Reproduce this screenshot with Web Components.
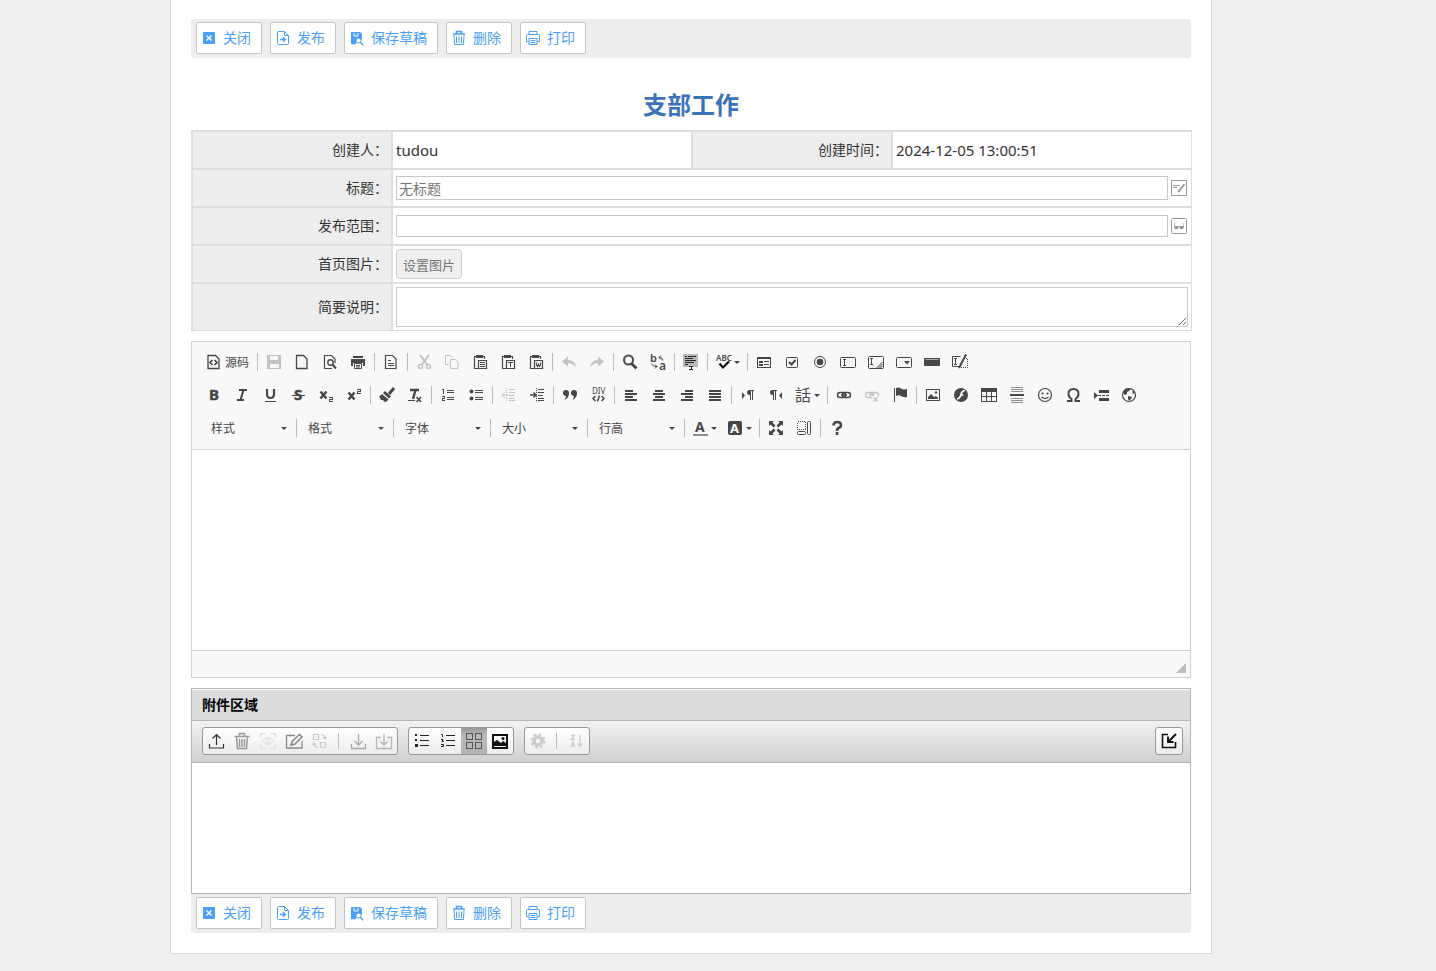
<!DOCTYPE html>
<html lang="zh-CN">
<head>
<meta charset="utf-8">
<title>支部工作</title>
<style>
    body {
        margin: 0;
        padding: 0 54px 0 0;
        background: #efefef;
        color: #333;
        font: 14px/20px "Noto Sans", "Noto Sans CJK SC", sans-serif;
    }
</style>
</head>
<body>
<doc-page>
    <action-bar></action-bar>
    <doc-form heading="支部工作"></doc-form>
    <rich-editor></rich-editor>
    <attach-panel heading="附件区域"></attach-panel>
    <action-bar></action-bar>
</doc-page>

<script>
// 16x16 icons, stroked by default; class "f" is filled, "p" keeps pixel edges
const ICONS = {
    // action bar
    close: `<rect class="f" x="2" y="2" width="12" height="12" rx="1"/><path d="M5.500 5.500l5 5m0-5l-5 5" stroke="#fff" stroke-width="1.400"/>`,
    publish: `<path d="M3.500 1.500h6l4 4v8q0 1-1 1h-9q-1 0-1-1v-11q0-1 1-1zM9.500 1.500v4h4"/><path d="M5 9.500h5M8 7.300l2.200 2.200L8 11.700" stroke-width="1.600"/>`,
    draft: `<path class="f" d="M2 2h9l2 2v6l-3-2-3 2v4H2z"/><path d="M5 3v3h4V3" stroke="#fff"/><circle cx="9.500" cy="10.500" r="2.500" fill="#fff"/><path d="M11.200 12.200l3 3M2 13.500h5" stroke-width="1.300"/>`,
    trash: `<path d="M2 4h12M5.500 4V1.500h5V4" stroke-width="1.600"/><path d="M3 5l.5 9.500h9L13 5M5.500 6.500V13M8 6.500V13M10.500 6.500V13"/>`,
    print: `<path d="M4 4.500v-3h8v3M3.500 11.500h-2V5.500q0-1 1-1h11q1 0 1 1v6h-2M4 8.500h8v6H4zM5.500 10.500h5M5.500 12.500h5"/>`,
    // form fields
    edit: `<rect x=".5" y=".5" width="15" height="15"/><path d="M2 5.500h7M2 7.500h4"/><path d="M13.500 4l-5.500 7-1 1" stroke-width="2"/>`,
    glasses: `<rect x=".5" y=".5" width="15" height="15" rx="1"/><path class="f" d="M3 8h4.500v2q-1 2-3.500 1L3 9zM8.500 8H13v1l-1 2q-2.500 1-3.500-1z"/><path opacity=".5" d="M3.500 8V5.500h1M12.500 8V5.500h-1M7 8.500h2"/>`,
    // editor, row 1
    source: `<path d="M2 1.500h7.500l3.500 3.500v9.500H2z" stroke-width="1.300"/><path d="M6.500 6L4 8.500 6.500 11M8.500 6L11 8.500 8.500 11" stroke-width="1.700"/>`,
    save: `<path class="f" fill-rule="evenodd" d="M1 1h14v14H1zM4 2v4h8V2zM4 10v4h9v-4z"/><path class="p" d="M3 9.500h10"/>`,
    newpage: `<path d="M2.500 1.500h7l3.500 3.500v9.500H2.500z" stroke-width="1.300"/>`,
    preview: `<path d="M10 14.500H2.500v-13h7l3.500 3.500v4" stroke-width="1.200"/><circle cx="8.500" cy="8.500" r="2.700" stroke-width="1.400"/><path d="M10.500 10.500l3.500 4" stroke-width="2"/>`,
    ckprint: `<path class="f" d="M3 2h10v2H3zM1 5h14v7h-2V9H3v3H1z"/><path d="M4.500 9.500h7v5h-7zM6 11.500h4M6 13h4"/>`,
    doc: `<path d="M2.500 1.500h7l3.500 3.500v9.500H2.500z" stroke-width="1.200"/><path class="p" d="M5 6.500h3M5 9.500h6M5 11.500h6"/>`,
    cut: `<path d="M4 1l7.500 10M13 1L5.500 11" stroke-width="2"/><circle cx="4.500" cy="12.500" r="2" stroke-width="1.400"/><circle cx="12.500" cy="12.500" r="2" stroke-width="1.400"/>`,
    copy: `<path d="M5 10.500H1.500v-9H6L8.500 4M6.500 5.500h5l2.500 3v6H6.500z"/>`,
    paste: `<path d="M4 2.500H2.500v12H6M11 2.500h1.500V5M6.500 6.500h8v8h-8z" stroke-width="1.200"/><path class="f p" d="M4 1h7v3H4z"/><path class="p" d="M8 8.500h5M8 10.500h5M8 12.500h5"/>`,
    pastetext: `<path d="M4 2.500H2.500v12H6M11 2.500h1.500V5M6.500 6.500h8v8h-8z" stroke-width="1.200"/><path class="f p" d="M4 1h7v3H4z"/><path class="p" d="M8 8.500h5M10.500 8v5"/>`,
    pasteword: `<path d="M4 2.500H2.500v12H6M11 2.500h1.500V5M6.500 6.500h8v8h-8zM8.500 8.500v2l1 2 1-2 1 2 1-2v-2" stroke-width="1.200"/><path class="f p" d="M4 1h7v3H4z"/>`,
    undo: `<path class="f" d="M1 7.500L7 2.500V6q7 0 8 7.500Q12 9 7 9v3.500z"/>`,
    redo: `<path class="f" d="M15 7.500L9 2.500V6q-7 0-8 7.500Q4 9 9 9v3.500z"/>`,
    find: `<circle cx="6.500" cy="6" r="4.500" stroke-width="2"/><path d="M9.500 9.500l5 5" stroke-width="3"/>`,
    replace: `<text x="0" y="8" font-size="11" font-weight="600">b</text><text x="9" y="16" font-size="12" font-weight="600">a</text><path d="M9 3.500l2-2M9 3.500l2 2M9 3.500q4 0 4 3M7 12.500l-2-2M7 12.500l-2 2M7 12.500q-5 0-5-3"/>`,
    selectall: `<path class="f p" fill-opacity=".35" d="M0 0h15v13H0z"/><path class="p" stroke="#222" d="M2 2.500h2M5 2.500h8M2 4.500h8M2 6.500h11M2 8.500h9M2 10.500h3M6 12.500h4M6 15.500h4M8 12v4"/>`,
    spell: `<text x="0" y="7" font-size="8" font-weight="600">ABC</text><path d="M3.500 9.500l3.500 4 6-6" stroke="#111" stroke-width="2.200"/>`,
    form: `<path class="p" d="M1.500 3.500h13v10h-13z"/><path class="f p" d="M1 3h14v2H1zM3 7h4v2H3zM3 10h4v2H3z"/><path class="p" d="M8 7.500h5M8 10.500h5"/>`,
    check: `<rect x="2.500" y="3.500" width="11" height="10" rx="1"/><path d="M5 8l2.500 2.500L11.500 6" stroke-width="2"/>`,
    radio: `<circle cx="8" cy="8" r="5.500"/><circle class="f" cx="8" cy="8" r="3.300"/>`,
    textfield: `<rect x=".5" y="3.500" width="15" height="10" rx="1"/><path class="p" d="M3 5.500h3M3 11.500h3M4.500 5v7"/>`,
    textarea: `<rect x=".5" y="2.500" width="15" height="12" rx="1"/><path class="p" d="M2 4.500h3M2 10.500h3M3.500 4v7"/><path d="M8.500 14l6-6M10.500 14l4-4M12.500 14l2-2"/>`,
    select: `<rect x=".5" y="3.500" width="15" height="10" rx="1"/><path class="f" d="M8 7h6l-3 3.500z"/>`,
    button: `<rect class="f" x="0" y="4" width="16" height="8" rx="1"/><path stroke="#aaa" d="M1.500 5.500h13"/>`,
    hidden: `<path d="M8.500 2.500H.5v10H7"/><path class="p" d="M2 4.500h3M2 10.500h3M3.500 4v7"/><path d="M14 .5L7 14" stroke-width="2"/><path d="M9 13.500h6.500v-9H12" stroke-dasharray="1 1"/>`,
    // editor, row 2
    bold: `<text x="3" y="13" font-size="15" font-weight="bold" style="stroke:currentColor;stroke-width:.5">B</text>`,
    italic: `<path d="M5 3h8M3 13h7M9.500 3L6.500 13" stroke-width="2"/>`,
    underline: `<path d="M5 2v5q0 4 3.500 4T12 7V2" stroke-width="2.200"/><path class="p" d="M3 14.500h11"/>`,
    strike: `<text x="4" y="13" font-size="15" font-weight="bold" style="stroke:currentColor;stroke-width:.5">S</text><path class="p" d="M2 8.500h13"/>`,
    sub: `<path d="M2.500 4.500l6 7m0-7l-6 7" stroke-width="2.500"/><path class="p" d="M11 10.500h3.500v2h-3v2H15"/>`,
    sup: `<path d="M2.500 5.500l6 7m0-7l-6 7" stroke-width="2.500"/><path class="p" d="M11 2.500h3.500v2h-3v2H15"/>`,
    brush: `<path d="M10 7l5-6" stroke-width="3"/><path class="f" d="M6 4l6 5.500-2 2L4 6zM3 7l6.500 5.500L7 15l-2-.5L4 13H2L0 9q2 0 3-2z"/>`,
    removeformat: `<path d="M3 3h9M8.500 3l-2.500 9" stroke-width="2.400"/><path class="p" d="M1 13.500h7"/><path d="M9.500 10l4.500 5m0-5l-4.500 5" stroke-width="1.600"/>`,
    numlist: `<path class="p" d="M7 3.500h7M7 5.500h7M7 10.500h7M7 12.500h7M2 2.500h1.500V7M2 9.500h2.500v2h-2v2H5"/>`,
    bullist: `<circle class="f" cx="3.500" cy="4.500" r="2"/><circle class="f" cx="3.500" cy="11.500" r="2"/><path class="p" d="M7 3.500h8M7 5.500h8M7 10.500h8M7 12.500h8"/>`,
    outdent: `<path class="p" d="M8 2.500h6M8 5.500h6M8 8.500h5M8 11.500h6M8 13.500h6"/><path class="p" d="M5.500 1v14" stroke-dasharray="1 1"/><path d="M7 8H1.500M3.500 5.500L1 8l2.500 2.500"/>`,
    indent: `<path class="p" d="M9 2.500h6M9 5.500h6M9 8.500h5M9 11.500h6M9 13.500h6"/><path class="p" d="M7.500 1v14" stroke-dasharray="1 1"/><path d="M1 8h6M4.500 5.500L7 8l-2.500 2.500" stroke-width="1.500"/>`,
    quote: `<circle class="f" cx="4" cy="6" r="3"/><path class="f" d="M7 6q0 5-4.500 7 2-3 1.500-5z"/><circle class="f" cx="12" cy="6" r="3"/><path class="f" d="M15 6q0 5-4.500 7 2-3 1.500-5z"/>`,
    div: `<text x="2" y="7" font-size="8">DIV</text><path d="M5.500 9L3 11.500 5.500 14M11.500 9l2.500 2.500-2.500 2.500M9.500 8.500l-2 6" stroke-width="1.500"/>`,
    left: `<path class="p" d="M2 4h8M2 7h12M2 10h8M2 13h12" stroke-width="2"/>`,
    center: `<path class="p" d="M4 4h8M2 7h12M4 10h8M2 13h12" stroke-width="2"/>`,
    right: `<path class="p" d="M6 4h8M2 7h12M6 10h8M2 13h12" stroke-width="2"/>`,
    justify: `<path class="p" d="M2 4h12M2 7h12M2 10h12M2 13h12" stroke-width="2"/>`,
    ltr: `<path class="f" d="M2 5l3 3.500L2 12zM14 3H9.500Q7 3 7 5.500T10 8v5h1V4h1v9h1V4h1z"/>`,
    rtl: `<path class="f" d="M14 5l-3 3.500 3 3.500zM9 3H4.500Q2 3 2 5.500T5 8v5h1V4h1v9h1V4h1z"/>`,
    lang: `<text x="-1" y="14" font-size="16">話</text>`,
    link: `<rect x="1.500" y="5.500" width="8" height="5" rx="2.500" stroke-width="1.500"/><rect x="6.500" y="5.500" width="8" height="5" rx="2.500" stroke-width="1.500"/><path d="M5 8h6" stroke-width="1.500"/>`,
    unlink: `<path d="M8 10.500H4a2.500 2.500 0 010-5h3a2.500 2.500 0 012.500 2.500M6.500 8A2.500 2.500 0 019 5.500h3a2.500 2.500 0 012 4M5 8h5" stroke-width="1.300"/><path d="M9.500 10.500l4 4m0-4l-4 4" stroke-width="1.500"/>`,
    flag: `<path class="p" d="M2.500 1v14"/><path class="f" d="M4 1q3-1 5 .5t6 .5v8q-4 .5-6-1T4 9z"/>`,
    image: `<path class="p" d="M1.500 2.500h13v11h-13z"/><path class="f" d="M3 12v-2l3-3 3 3 2-1 2 2v1z"/><circle class="f" cx="11" cy="5.500" r="1.200"/>`,
    flash: `<circle class="f" cx="8" cy="8" r="7"/><path d="M12 3.500q-3 0-4 4t-4 4.500M7 8h3.500" stroke="#fff" stroke-width="1.700"/>`,
    table: `<path class="f p" d="M0 1h16v4H0z"/><path class="p" d="M.5 4.500h15v10H.5zM0 9.500h16M5.500 5v10M10.500 5v10"/>`,
    hr: `<path class="p" opacity=".6" d="M2 .5h12M2 2.500h12M2 4.500h12M2 11.500h12M2 13.500h12M2 15.500h12"/><path class="p" d="M1 8h14" stroke-width="2"/>`,
    smiley: `<circle cx="8" cy="8" r="6.500" stroke-width="1.200"/><circle class="f" cx="5.500" cy="6.500" r="1.100"/><circle class="f" cx="10.500" cy="6.500" r="1.100"/><path d="M4.500 10q3.500 3 7 0" stroke-width="1.200"/>`,
    omega: `<path d="M2 14h4.500v-2Q3.500 10 3.500 7q0-5 5-5t5 5q0 3-3 5v2H15" stroke-width="2"/>`,
    pagebreak: `<path class="f p" d="M6 3h10v3H6zM6 11h10v3H6z"/><path class="p" d="M5 8.500h11" stroke-dasharray="3 1"/><path class="f" d="M1 5l4 3.500L1 12z"/>`,
    iframe: `<circle cx="8" cy="8" r="6.500" stroke-width="1.200"/><path class="f" d="M2 6l2-4 4-1 2 1-2 2-2 1v2l-2 1zM7 9l4 1-1 2-2 2-1-2zM11 3l3 3-2 1z"/>`,
    // editor, row 3
    color: `<path class="f" fill-opacity=".6" d="M0 14h15v2H0z"/><text x="2" y="12" font-size="14" font-weight="bold">A</text>`,
    bgcolor: `<rect class="f" x="0" y="1" width="14" height="14" rx="2"/><text x="2" y="13" font-size="13" font-weight="bold" style="fill:#fff">A</text>`,
    maximize: `<path class="f" d="M1 1h5L4.500 2.500l3 3-2 2-3-3L1 6zM15 1v5l-1.500-1.500-3 3-2-2 3-3L10 1zM1 15v-5l1.500 1.500 3-3 2 2-3 3L6 15zM15 15h-5l1.500-1.500-3-3 2-2 3 3L15 10z"/>`,
    blocks: `<path class="p" d="M1.500 1.500h8v8h-8z" stroke-dasharray="1 1"/><rect x="1.500" y="11.500" width="8" height="3" rx="1"/><rect x="11.500" y="1.500" width="3" height="13" rx="1"/>`,
    about: `<path d="M4.500 5.500Q4.500 2 8.200 2T12 5.200Q12 7 10 7.800T8 11" stroke-width="2.600"/><path class="f" d="M6.700 12h2.700v3H6.700z"/>`,
    // attachment panel
    upload: `<path d="M8.500 12V1.500M4.500 5.500l4-4 4 4M1.500 11v4h14v-4" stroke-width="1.200"/>`,
    bin: `<path d="M.5 3.500h15M5.500 3V.5h5V3M2.500 4l1 11.500h9l1-11.500M5.500 6v8M8 6v8M10.500 6v8" stroke-width="1.500"/>`,
    eye: `<path d="M.5 5V.5H5M11 .5h4.500V5M.5 11v4.500H5M11 15.500h4.500V11M2 8q6-7 12 0-6 7-12 0z"/><circle cx="8" cy="8" r="2"/>`,
    rename: `<path d="M9 2.500H.5v12.500h15.500V8" stroke-width="1.300"/><path d="M5 12l1.500-4 7-6.500L16 4l-7 7z" stroke-width="1.600"/>`,
    swap: `<path d="M1.500 1.500h5v5h-5zM8.500 9.500h5v5h-5zM9 1.500q4 0 4 4M11 4l2 2 1.500-2M6 14.500q-4 0-4-4M.5 12L2 10l2 2" stroke-width="1.200"/>`,
    download: `<path d="M8.500 1v11M4.500 8l4 4 4-4M1.500 11v4.500h14V11" stroke-width="1.300"/>`,
    saveall: `<path d="M5 4.500H.5v11h15v-11H11M8 1v11M4.500 8.500L8 12l3.500-3.500" stroke-width="1.300"/>`,
    bullets: `<path class="p" d="M6 2.500h9M6 7.500h9M6 12.500h9"/><path class="f" d="M1 1h2v2H1zM1 6h2v2H1zM1 11h3v3H1z"/>`,
    numbers: `<path class="p" d="M6 2.500h9M6 7.500h9M6 12.500h9"/><path d="M1 1.500h1.500V4M1 6.500h2L2 8.500h2M1 11.500h2.500v2H1"/>`,
    grid: `<path class="p" d="M.5.500h6v6h-6zM9.500.500h6v6h-6zM.5 9.500h6v6h-6zM9.500 9.500h6v6h-6z"/>`,
    picture: `<path class="p" d="M1 2h14v13H1z" stroke-width="2"/><path class="f" d="M2 13V9l3-2 4 3 2-2 3 2v3z"/><circle class="f" cx="11" cy="5.500" r="1.500"/>`,
    gear: `<circle cx="8" cy="8" r="4" stroke-width="3.500"/><circle cx="8" cy="8" r="6.500" stroke-width="2" stroke-dasharray="2.600 2.500"/>`,
    sort: `<path d="M3 2.500h3.500L3 6.500h4M3 14l2-5 2 5M4 12.500h2M12 2v11M9.500 10.500L12 13l2.500-2.500" stroke-width="1.300"/>`,
    dock: `<path d="M7 1.500H1.500v13h13V9" stroke-width="1.600"/><path d="M15 1L7 9M7 3.500V9h5.500" stroke-width="1.900"/>`
};

class BaseElement extends HTMLElement {

    constructor() {
        super();
        this.shadowDOM = this.attachShadow({mode: "open"});
    }

    connectedCallback() {
        this.shadowDOM.innerHTML = `
            <style>
                * {
                    margin: 0;
                    padding: 0;
                    box-sizing: border-box;
                    font-family: inherit;
                }
                :host {
                    display: block;
                }
            </style>` + this.render();
    }
}

class UiIcon extends BaseElement {

    render() {
        return `
            <style>
                :host {
                    flex: none;
                    width: 16px;
                    height: 16px;
                }
                svg {
                    display: block;
                    width: 100%;
                    height: 100%;
                    overflow: visible;
                    fill: none;
                    stroke: currentColor;
                }
                .f {
                    fill: currentColor;
                    stroke: none;
                }
                .p {
                    shape-rendering: crispEdges;
                }
                text {
                    fill: currentColor;
                    stroke: none;
                }
            </style>
            <svg viewBox="0 0 16 16" aria-hidden="true">${ICONS[this.getAttribute("name")]}</svg>`;
    }
}

class DocPage extends BaseElement {

    render() {
        return `
            <style>
                :host {
                    box-sizing: border-box;
                    max-width: 1042px;
                    margin: 0 auto 17px;
                    padding: 19px 20px 20px;
                    border: 1px solid #d9d9d9;
                    border-top: 0;
                    background: #fff;
                }
            </style>
            <slot></slot>`;
    }
}

class ActionBar extends BaseElement {

    render() {
        const actions = [["close", "关闭"], ["publish", "发布"], ["draft", "保存草稿"], ["trash", "删除"], ["print", "打印"]];
        return `
            <style>
                :host {
                    display: flex;
                    flex-wrap: wrap;
                    gap: 8px;
                    padding: 3px 5px 4px;
                    background: #ededed;
                    border-radius: 3px;
                }
                button {
                    display: flex;
                    align-items: center;
                    gap: 6px;
                    height: 32px;
                    padding: 0 10px 0 4px;
                    border: 1px solid #c4c4c4;
                    border-radius: 2px;
                    background: #fff;
                    color: #4aa0f8;
                    font-size: 14px;
                    line-height: 20px;
                }
            </style>
            ${actions.map(([icon, text]) => `<button type="button"><ui-icon name="${icon}"></ui-icon>${text}</button>`).join("")}`;
    }
}

class DocForm extends BaseElement {

    render() {
        return `
            <style>
                h1 {
                    padding: 30px 0 8px;
                    color: #3b73b9;
                    font-size: 24px;
                    line-height: 34px;
                    text-align: center;
                }
                table {
                    width: calc(100% + 1px);
                    table-layout: fixed;
                    border-spacing: 0;
                    border-style: solid;
                    border-color: #ddd;
                    border-width: 1px 0 0 1px;
                }
                th, td {
                    height: 38px;
                    padding: 0 3px;
                    border: 1px solid #ddd;
                    vertical-align: middle;
                    text-align: left;
                }
                th {
                    background: #ededed;
                    font-weight: normal;
                    text-align: right;
                }
                .tall > * {
                    height: 48px;
                }
                .value {
                    font-size: 15px;
                }
                .field {
                    display: flex;
                    align-items: center;
                    gap: 3px;
                    padding-right: 1px;
                }
                input, textarea {
                    flex: 1;
                    min-width: 0;
                    height: 22px;
                    padding: 0 2px;
                    border: 1px solid #c8c8c8;
                    background: #fff;
                    color: #333;
                    font-size: 14px;
                }
                #subject {
                    height: 24px;
                }
                input::placeholder {
                    color: #757575;
                }
                textarea {
                    display: block;
                    width: 100%;
                    height: 40px;
                }
                .icon {
                    border: 0;
                    background: none;
                    color: #999;
                }
                .cover {
                    display: block;
                    height: 30px;
                    padding: 0 6px;
                    border: 1px solid #ccc;
                    border-radius: 4px;
                    background: #efefef;
                    color: #757575;
                    font-size: 13px;
                }
            </style>
            <h1>${this.getAttribute("heading")}</h1>
            <table>
                <colgroup><col style="width:20%"><col style="width:30%"><col style="width:20%"><col style="width:30%"></colgroup>
                <tr>
                    <th>创建人：</th><td class="value">tudou</td>
                    <th>创建时间：</th><td class="value">2024-12-05 13:00:51</td>
                </tr>
                <tr>
                    <th><label for="subject">标题：</label></th>
                    <td colspan="3"><div class="field">
                        <input id="subject" type="text" placeholder="无标题">
                        <button class="icon" type="button" aria-label="编辑"><ui-icon name="edit"></ui-icon></button>
                    </div></td>
                </tr>
                <tr>
                    <th><label for="scope">发布范围：</label></th>
                    <td colspan="3"><div class="field">
                        <input id="scope" type="text">
                        <button class="icon" type="button" aria-label="选择"><ui-icon name="glasses"></ui-icon></button>
                    </div></td>
                </tr>
                <tr>
                    <th><label for="cover">首页图片：</label></th>
                    <td colspan="3"><button class="cover" id="cover" type="button">设置图片</button></td>
                </tr>
                <tr class="tall">
                    <th><label for="summary">简要说明：</label></th>
                    <td colspan="3"><textarea id="summary"></textarea></td>
                </tr>
            </table>`;
    }
}

// "|" is a separator, "-" disables the button, "+" adds a menu arrow, "=" is a drop-down
const EDITOR_ROWS = [
    "source | -save newpage preview ckprint | doc | -cut -copy paste pastetext pasteword | -undo -redo | find replace | selectall | +spell | form check radio textfield textarea select button hidden",
    "bold italic underline strike sub sup | brush removeformat | numlist bullist | -outdent indent | quote div | left center right justify | ltr rtl +lang | link -unlink flag | image flash table hr smiley omega pagebreak iframe",
    "=样式 | =格式 | =字体 | =大小 | =行高 | +color +bgcolor | maximize blocks | about"
];

class RichEditor extends BaseElement {

    item(token) {
        if (token === "|") {
            return `<span class="sep"></span>`;
        }
        const flag = "-+=".includes(token[0]) ? token[0] : "";
        const name = flag ? token.slice(1) : token;
        if (flag === "=") {
            return `<label class="combo"><select aria-label="${name}"><option>${name}</option></select><i class="arrow"></i></label>`;
        }
        return `<button type="button" aria-label="${name}"${flag === "-" ? " disabled" : ""}>
            <ui-icon name="${name}"></ui-icon>${flag === "+" ? `<i class="arrow"></i>` : ""}${name === "source" ? "源码" : ""}</button>`;
    }

    render() {
        return `
            <style>
                :host {
                    margin: 10px 0;
                    border: 1px solid #d1d1d1;
                    background: #fff;
                }
                .toolbar {
                    padding: 6px 8px 2px;
                    border-bottom: 1px solid #d1d1d1;
                    background: #f8f8f8;
                }
                .row {
                    display: flex;
                    flex-wrap: wrap;
                    align-items: center;
                    padding-bottom: 5px;
                }
                .row:last-child {
                    padding-left: 2px;
                }
                button {
                    display: flex;
                    align-items: center;
                    gap: 3px;
                    height: 28px;
                    padding: 0 6px;
                    border: 0;
                    background: none;
                    color: #474747;
                    font-size: 12px;
                }
                button:disabled {
                    opacity: .3;
                }
                .sep {
                    width: 1px;
                    height: 18px;
                    margin: 0 2px;
                    background: #bcbcbc;
                }
                .arrow {
                    width: 0;
                    border: 3px solid transparent;
                    border-top-color: #474747;
                    border-bottom: 0;
                }
                button .arrow {
                    margin: 0 -1px;
                }
                .combo {
                    display: grid;
                    align-items: center;
                    width: 92px;
                }
                .combo > * {
                    grid-area: 1 / 1;
                }
                .combo .arrow {
                    justify-self: end;
                    margin-right: 7px;
                    pointer-events: none;
                }
                select {
                    width: 100%;
                    height: 28px;
                    padding: 0 20px 0 9px;
                    border: 0;
                    appearance: none;
                    background: none;
                    color: #474747;
                    font-size: 12px;
                }
                .content {
                    min-height: 200px;
                    outline: 0;
                }
                .footer {
                    display: flex;
                    justify-content: flex-end;
                    align-items: flex-end;
                    height: 27px;
                    padding: 4px;
                    border-top: 1px solid #d1d1d1;
                    background: #f8f8f8;
                }
                .grip {
                    border: 5px solid #bcbcbc;
                    border-top-color: transparent;
                    border-left-color: transparent;
                }
            </style>
            <div class="toolbar">
                ${EDITOR_ROWS.map(row => `<div class="row">${row.split(" ").map(this.item).join("")}</div>`).join("")}
            </div>
            <div class="content" contenteditable="true" role="textbox" aria-label="正文"></div>
            <div class="footer"><span class="grip"></span></div>`;
    }
}

// each icon with its grey, null is a separator
const ATTACH_GROUPS = [
    [["upload", "#333"], ["bin", "#999"], ["eye", "#ddd"], ["rename", "#888"], ["swap", "#ccc"], null, ["download", "#aaa"], ["saveall", "#b5b5b5"]],
    [["bullets", "#222"], ["numbers", "#222"], ["grid", "#555"], ["picture", "#111"]],
    [["gear", "#ccc"], null, ["sort", "#ccc"]],
    [["dock", "#111"]]
];

class AttachPanel extends BaseElement {

    render() {
        const button = item => item
            ? `<button type="button" class="${item[0]}" style="color:${item[1]}" aria-label="${item[0]}"><ui-icon name="${item[0]}"></ui-icon></button>`
            : `<span class="sep"></span>`;
        return `
            <style>
                :host {
                    border: 1px solid #b6b6b6;
                    background: #fff;
                }
                h2 {
                    padding: 5px 10px 6px;
                    border-top: 1px solid #fff;
                    border-bottom: 1px solid #b6b6b6;
                    background: #dcdcdc;
                    color: #000;
                    font-size: 14px;
                    line-height: 19px;
                }
                .toolbar {
                    display: flex;
                    flex-wrap: wrap;
                    gap: 10px;
                    padding: 6px 7px 7px 10px;
                    border-bottom: 1px solid #b6b6b6;
                    background: linear-gradient(#f2f2f2, #cfcfcf);
                }
                .group {
                    display: flex;
                    height: 28px;
                    border: 1px solid #999;
                    border-radius: 3px;
                    background: linear-gradient(#fff, #ececec);
                }
                .group:last-child {
                    margin-left: auto;
                }
                button {
                    display: grid;
                    place-items: center;
                    width: 26px;
                    height: 26px;
                    border: 0;
                    background: none;
                }
                .grid {
                    background: linear-gradient(#999, #bbb 30%, #b3b3b3);
                }
                .sep {
                    width: 1px;
                    height: 16px;
                    margin: 5px 6px 5px 5px;
                    background: #bbb;
                }
                .files {
                    min-height: 130px;
                }
            </style>
            <h2>${this.getAttribute("heading")}</h2>
            <div class="toolbar">
                ${ATTACH_GROUPS.map(group => `<div class="group">${group.map(button).join("")}</div>`).join("")}
            </div>
            <div class="files"></div>`;
    }
}

customElements.define("ui-icon", UiIcon);
customElements.define("doc-page", DocPage);
customElements.define("action-bar", ActionBar);
customElements.define("doc-form", DocForm);
customElements.define("rich-editor", RichEditor);
customElements.define("attach-panel", AttachPanel);
</script>
</body>
</html>
